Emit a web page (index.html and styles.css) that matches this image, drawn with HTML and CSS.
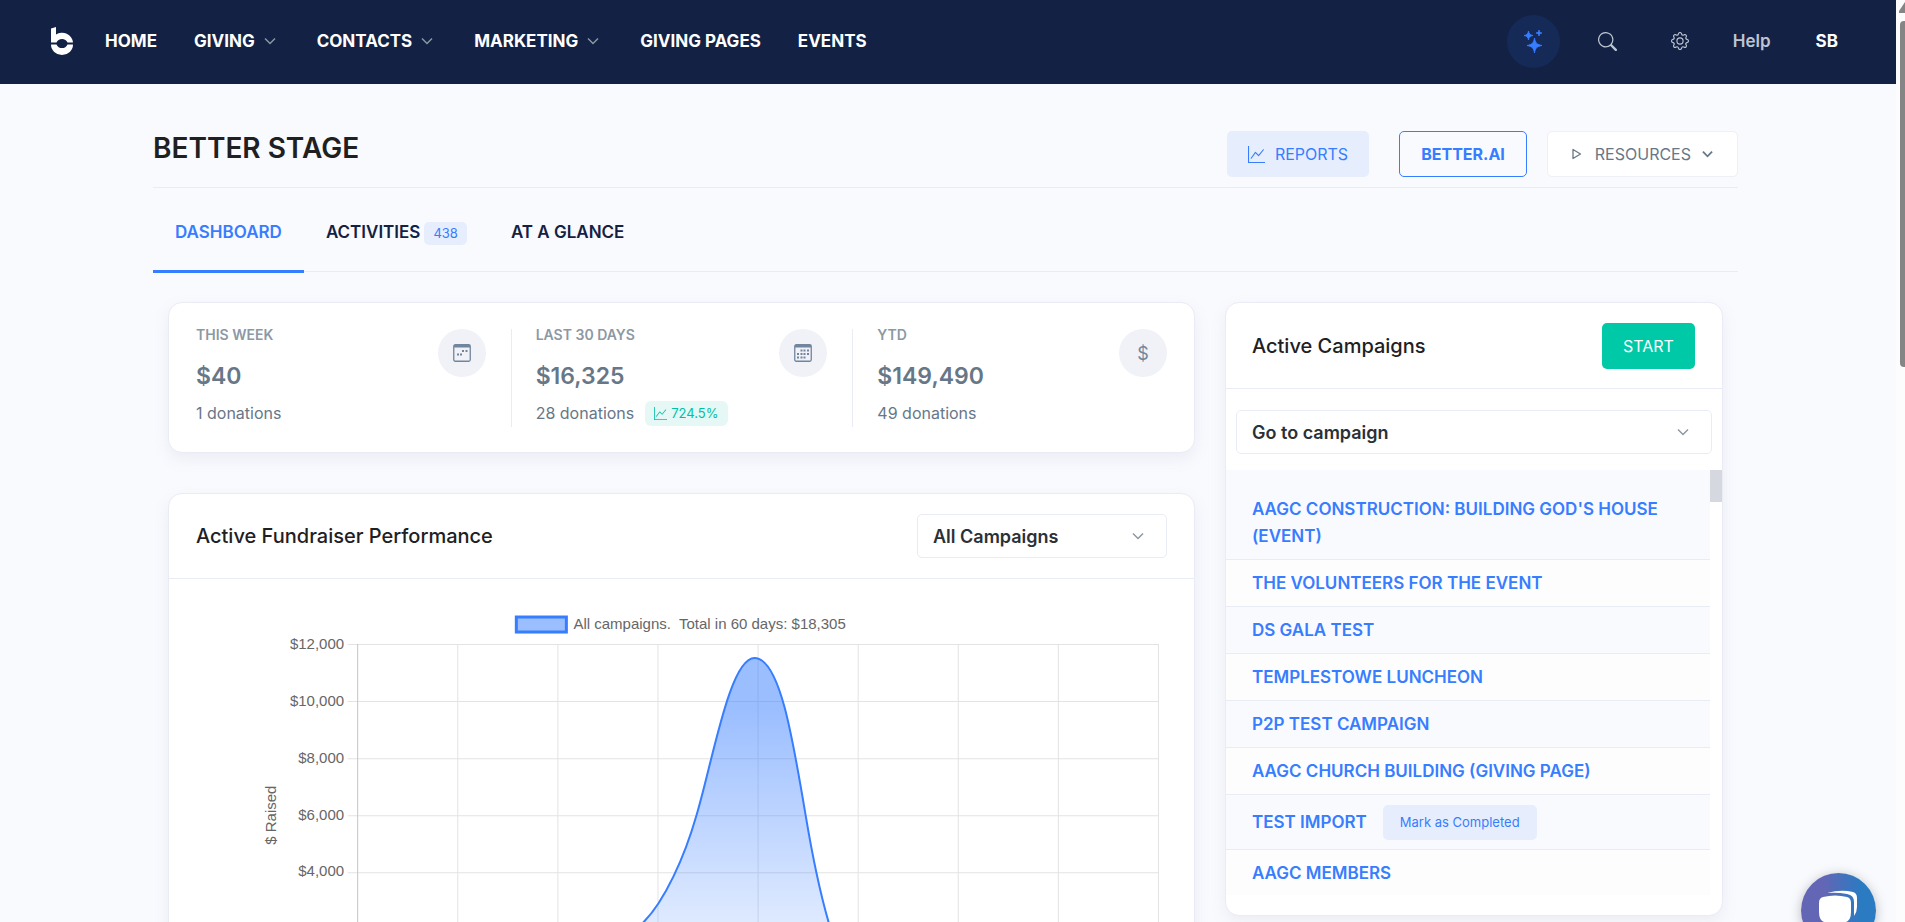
FILE: index.html
```
<!DOCTYPE html>
<html lang="en">
<head>
<meta charset="utf-8">
<title>Better Stage - Dashboard</title>
<link rel="stylesheet" href="styles.css">
</head>
<body>
<svg class="defs" aria-hidden="true">
  <symbol id="chevron" viewBox="0 0 12 8"><path d="M1 1.500 6 6.500 11 1.500" fill="none" stroke="currentColor" stroke-width="1.500"/></symbol>
  <symbol id="graph" viewBox="0 0 16 16"><path fill="currentColor" fill-rule="evenodd" d="M0 0h1v15h15v1H0V0Zm14.817 3.113a.5.5 0 0 1 .07.704l-4.500 5.500a.5.5 0 0 1-.740.037L7.060 6.767l-3.656 5.027a.5.5 0 0 1-.808-.588l4-5.500a.5.5 0 0 1 .758-.060l2.609 2.610 4.150-5.073a.5.5 0 0 1 .704-.070Z"/></symbol>
</svg>
<div class="app">
  <div class="page">
    <header class="topbar">
      <a class="logo" href="#" aria-label="Better home">
        <svg width="22" height="28" viewBox="0 0 22 28"><path d="M0 1.500 5 0v7.500A11 11 0 0 1 22 15.500h-5.500a6 6 0 0 0-11 0H0ZM0 17.500h5.500a6 6 0 0 0 11 0H22a11 10.500 0 0 1-22 0Z" fill="#fff"/></svg>
      </a>
      <nav class="nav">
        <a href="#">HOME</a>
        <a href="#">GIVING <svg class="chev"><use href="#chevron"/></svg></a>
        <a href="#">CONTACTS <svg class="chev"><use href="#chevron"/></svg></a>
        <a href="#">MARKETING <svg class="chev"><use href="#chevron"/></svg></a>
        <a href="#">GIVING PAGES</a>
        <a href="#">EVENTS</a>
      </nav>
      <div class="tools">
        <button class="spark" aria-label="Assistant">
          <svg width="18" height="23" viewBox="0 0 18 23" fill="#377dff"><path d="M10.500 8c.9 5 2.300 6.500 7.500 7.500-5.200 1-6.600 2.500-7.500 7.500-.9-5-2.300-6.500-7.500-7.500 5.200-1 6.600-2.500 7.500-7.500ZM4.500 1c.6 3 1.500 4 4.500 4.500-3 .6-3.900 1.500-4.500 4.500C3.900 7 3 6.100 0 5.500 3 5 3.900 4 4.500 1ZM15 0c.4 2 1 2.600 3 3-2 .4-2.600 1-3 3-.4-2-1-2.600-3-3 2-.4 2.600-1 3-3Z" stroke="#377dff" stroke-width=".8"/></svg>
        </button>
        <button class="tool" aria-label="Search">
          <svg width="19" height="19" viewBox="0 0 16 16"><path fill="currentColor" d="M11.742 10.344a6.500 6.500 0 1 0-1.397 1.398h-.001c.03.04.062.078.098.115l3.850 3.850a1 1 0 0 0 1.415-1.414l-3.850-3.850a1.007 1.007 0 0 0-.115-.100zM12 6.500a5.500 5.500 0 1 1-11 0 5.500 5.500 0 0 1 11 0z"/></svg>
        </button>
        <button class="tool" aria-label="Settings">
          <svg width="18" height="18" viewBox="0 0 16 16" fill="currentColor"><path d="M8 4.754a3.246 3.246 0 1 0 0 6.492 3.246 3.246 0 0 0 0-6.492zM5.754 8a2.246 2.246 0 1 1 4.492 0 2.246 2.246 0 0 1-4.492 0z"/><path d="M9.796 1.343c-.527-1.790-3.065-1.790-3.592 0l-.094.319a.873.873 0 0 1-1.255.520l-.292-.160c-1.640-.892-3.433.902-2.540 2.541l.159.292a.873.873 0 0 1-.520 1.255l-.319.094c-1.790.527-1.790 3.065 0 3.592l.319.094a.873.873 0 0 1 .520 1.255l-.160.292c-.892 1.640.901 3.434 2.541 2.540l.292-.159a.873.873 0 0 1 1.255.520l.094.319c.527 1.790 3.065 1.790 3.592 0l.094-.319a.873.873 0 0 1 1.255-.520l.292.160c1.640.893 3.434-.902 2.540-2.541l-.159-.292a.873.873 0 0 1 .520-1.255l.319-.094c1.790-.527 1.790-3.065 0-3.592l-.319-.094a.873.873 0 0 1-.520-1.255l.160-.292c.893-1.640-.902-3.433-2.541-2.540l-.292.159a.873.873 0 0 1-1.255-.520l-.094-.319zm-2.633.283c.246-.835 1.428-.835 1.674 0l.094.319a1.873 1.873 0 0 0 2.693 1.115l.291-.160c.764-.415 1.600.420 1.184 1.185l-.159.292a1.873 1.873 0 0 0 1.116 2.692l.318.094c.835.246.835 1.428 0 1.674l-.319.094a1.873 1.873 0 0 0-1.115 2.693l.160.291c.415.764-.420 1.600-1.185 1.184l-.291-.159a1.873 1.873 0 0 0-2.693 1.116l-.094.318c-.246.835-1.428.835-1.674 0l-.094-.319a1.873 1.873 0 0 0-2.692-1.115l-.292.160c-.764.415-1.600-.420-1.184-1.185l.159-.291A1.873 1.873 0 0 0 1.945 8.930l-.319-.094c-.835-.246-.835-1.428 0-1.674l.319-.094A1.873 1.873 0 0 0 3.060 4.377l-.160-.292c-.415-.764.420-1.600 1.185-1.184l.292.159a1.873 1.873 0 0 0 2.692-1.115l.094-.319z"/></svg>
        </button>
        <a class="help" href="#">Help</a>
        <a class="user" href="#">SB</a>
      </div>
    </header>

    <main class="content">
      <div class="heading">
        <h1>BETTER STAGE</h1>
        <div class="actions">
          <button class="btn btn-soft"><svg class="btn-icon"><use href="#graph"/></svg>REPORTS</button>
          <button class="btn btn-outline">BETTER.AI</button>
          <button class="btn btn-white"><svg class="play" viewBox="0 0 10 12"><path d="M1 1.500 8.500 6 1 10.500Z" fill="none" stroke="currentColor" stroke-width="1.300" stroke-linejoin="round"/></svg>RESOURCES<svg class="chev-sm" viewBox="0 0 12 8"><path d="M1 1.500 6 6.500 11 1.500" fill="none" stroke="currentColor" stroke-width="2"/></svg></button>
        </div>
      </div>
      <nav class="tabs">
        <a class="tab active" href="#">DASHBOARD</a>
        <a class="tab" href="#">ACTIVITIES <span class="count">438</span></a>
        <a class="tab" href="#">AT A GLANCE</a>
      </nav>

      <div class="columns">
        <div class="main-col">
          <section class="card stats">
            <div class="stat">
              <div>
                <h2>THIS WEEK</h2>
                <p class="amount">$40</p>
                <p class="donations">1 donations</p>
              </div>
              <span class="round"><svg width="18" height="18" viewBox="0 0 18 18"><rect x=".75" y=".75" width="16.500" height="16.500" rx="1.500" fill="none" stroke="currentColor" stroke-width="1.300"/><path d="M1 1h16v2.500H1ZM9 6h2v2H9zM12.500 6h2v2h-2zM4 9.500h2v2H4zM7 9.500h2v2H7z" fill="currentColor"/></svg></span>
            </div>
            <div class="stat">
              <div>
                <h2>LAST 30 DAYS</h2>
                <p class="amount">$16,325</p>
                <p class="donations">28 donations <span class="growth"><svg width="13" height="13"><use href="#graph"/></svg>724.5%</span></p>
              </div>
              <span class="round"><svg width="18" height="18" viewBox="0 0 18 18"><rect x=".75" y=".75" width="16.500" height="16.500" rx="1.500" fill="none" stroke="currentColor" stroke-width="1.300"/><path d="M1 1h16v2.500H1ZM6.500 5.500h2v2h-2zM9.500 5.500h2v2h-2zM13 5.500h2v2h-2zM3 9h2v2H3zM6.500 9h2v2h-2zM9.500 9h2v2h-2zM13 9h2v2h-2zM3 12.500h2v2H3zM6.500 12.500h2v2h-2zM9.500 12.500h2v2h-2z" fill="currentColor"/></svg></span>
            </div>
            <div class="stat">
              <div>
                <h2>YTD</h2>
                <p class="amount">$149,490</p>
                <p class="donations">49 donations</p>
              </div>
              <span class="round">$</span>
            </div>
          </section>

          <section class="card performance">
            <div class="card-head">
              <h2>Active Fundraiser Performance</h2>
              <div class="select">
                <select aria-label="Campaign"><option>All Campaigns</option></select>
                <svg class="chev"><use href="#chevron"/></svg>
              </div>
            </div>
            <div class="chart">
              <svg viewBox="0 0 970 500" role="img" aria-label="Donations raised in the last 60 days">
                <defs><linearGradient id="fill" gradientUnits="userSpaceOnUse" x1="0" y1="100" x2="0" y2="330"><stop offset="0" stop-color="#377dff" stop-opacity=".5"/><stop offset="1" stop-color="#377dff" stop-opacity=".14"/></linearGradient></defs>
                <g class="grid">
                  <path d="M151.500 37.500H962M151.500 94.500H962M151.500 151.500H962M151.500 208.500H962M151.500 265.500H962M151.500 322.500H962M151.500 379.500H962"/>
                  <path d="M261.500 37V379M361.500 37V379M461.500 37V379M561.500 37V379M661.500 37V379M761.500 37V379M861.500 37V379M961.500 37V379"/>
                  <path class="axis" d="M161.500 37V379"/>
                </g>
                <path d="M161 379C300 379 400 360 447 315C468 294 488 250 500 208C516 155 533 51 558 51C583 51 596 130 609 208C616 250 623 284 632 315C640 345 650 372 664 379Z" fill="url(#fill)"/>
                <path class="line" d="M161 379C300 379 400 360 447 315C468 294 488 250 500 208C516 155 533 51 558 51C583 51 596 130 609 208C616 250 623 284 632 315C640 345 650 372 664 379H961"/>
                <rect x="320" y="10" width="50" height="15" fill="#9bbeff" stroke="#377dff" stroke-width="3"/>
                <g class="labels">
                  <text x="377" y="22" xml:space="preserve">All campaigns.  Total in 60 days: $18,305</text>
                  <g text-anchor="end">
                    <text x="148" y="42">$12,000</text>
                    <text x="148" y="99">$10,000</text>
                    <text x="148" y="156">$8,000</text>
                    <text x="148" y="213">$6,000</text>
                    <text x="148" y="269">$4,000</text>
                    <text x="148" y="326">$2,000</text>
                    <text x="148" y="383">$0</text>
                  </g>
                  <text transform="translate(80 208) rotate(-90)" text-anchor="middle">$ Raised</text>
                </g>
              </svg>
            </div>
          </section>
        </div>

        <aside class="card campaigns">
          <div class="card-head">
            <h2>Active Campaigns</h2>
            <button class="btn btn-start">START</button>
          </div>
          <div class="select goto">
            <select aria-label="Go to campaign"><option>Go to campaign</option></select>
            <svg class="chev"><use href="#chevron"/></svg>
          </div>
          <div class="list-wrap">
            <ul class="list">
              <li><a href="#">AAGC CONSTRUCTION: BUILDING GOD'S HOUSE (EVENT)</a></li>
              <li><a href="#">THE VOLUNTEERS FOR THE EVENT</a></li>
              <li><a href="#">DS GALA TEST</a></li>
              <li><a href="#">TEMPLESTOWE LUNCHEON</a></li>
              <li><a href="#">P2P TEST CAMPAIGN</a></li>
              <li><a href="#">AAGC CHURCH BUILDING (GIVING PAGE)</a></li>
              <li><a href="#">TEST IMPORT</a><button class="mark">Mark as Completed</button></li>
              <li><a href="#">AAGC MEMBERS</a></li>
            </ul>
            <div class="list-bar"></div>
          </div>
        </aside>
      </div>
    </main>
    <button class="chat" aria-label="Open chat">
      <svg width="40" height="42" viewBox="0 0 40 42"><path d="M8 3Q22-1 34 2Q38 3 38 8V17Q38 22 35 26V12Q35 5 28 4Q18 2 8 3Z" fill="#fff"/><path d="M4 7Q16 4 28 7Q32 8 32 13V22Q32 30 27 32Q16 35 5 32Q0 30 0 22V13Q0 8 4 7Z" fill="#fff"/></svg>
    </button>
  </div>
  <div class="scrollbar"><svg width="9" height="14" viewBox="0 0 9 14"><path d="M3 13V11L9 2V13Z" fill="#858585"/></svg><div class="thumb"></div></div>
</div>
</body>
</html>
```
FILE: styles.css
```
* { box-sizing: border-box; }
body { margin: 0; font-family: Inter, "Liberation Sans", sans-serif; font-size: 17px; color: #1e2022; background: #f8fafd; }
h1, h2, p, ul { margin: 0; padding: 0; }
a { color: inherit; text-decoration: none; }
button, select { font: inherit; color: inherit; }
button { display: inline-flex; align-items: center; justify-content: center; border: 0; background: none; padding: 0; }
svg { display: block; flex: none; }
.defs { position: absolute; width: 0; height: 0; }
.app { display: flex; height: 100vh; overflow: hidden; }
.page { flex: 1; min-width: 0; background: #f9fafe; }

.topbar { display: flex; align-items: center; height: 84px; padding: 0 58px 0 51px; background: #132144; color: #fff; }
.logo { margin-right: 32px; padding-bottom: 2px; }
.nav { display: flex; align-items: center; gap: 37px; font-weight: 700; padding-bottom: 2px; }
.nav a { display: flex; align-items: center; gap: 9px; }
.chev { width: 12px; height: 8px; color: #8c98a4; }
.nav .chev { margin-right: 4px; }
.tools { display: flex; align-items: center; margin-left: auto; color: #bdc5d1; font-weight: 600; padding-bottom: 2px; }
.spark { width: 53px; height: 53px; border-radius: 50%; background: #162a57; margin-right: 38px; }
.tool { margin-right: 54px; }
.tool + .tool { margin-right: 44px; }
.help { margin-right: 45px; }
.user { color: #fff; font-weight: 700; }

.content { padding: 47px 158px 0 153px; }
.heading { display: flex; justify-content: space-between; border-bottom: 1px solid #e9ecf3; padding-bottom: 10px; }
h1 { font-size: 28px; line-height: 34px; font-weight: 600; }
.actions { display: flex; }
.btn { height: 46px; border-radius: 5px; border: 1px solid transparent; padding: 0 20px; font-size: 16px; }
.btn-soft { background: #e6edfd; color: #377dff; margin-right: 30px; }
.btn-icon { width: 17px; height: 17px; margin-right: 10px; }
.btn-outline { border-color: #377dff; color: #377dff; font-weight: 700; margin-right: 20px; padding: 0 21px; }
.btn-white { background: #fff; border-color: #edf0f6; color: #677788; padding: 0 24px; }
.play { width: 10px; height: 12px; margin-right: 13px; }
.chev-sm { width: 11px; height: 8px; margin-left: 11px; }
.tabs { display: flex; height: 84px; border-bottom: 1px solid #e9ecf3; color: #132144; font-weight: 600; }
.tab { display: flex; align-items: center; gap: 4px; padding: 6px 22px 0; margin-bottom: -2px; border-bottom: 3px solid transparent; }
.tab.active { color: #377dff; border-color: #377dff; }
.count { background: #e6edfd; color: #377dff; border-radius: 5px; padding: 0 9px; font-size: 13px; line-height: 23px; font-weight: 400; margin-top: 3px; }

.columns { display: grid; grid-template-columns: minmax(0, 1027fr) minmax(0, 498fr); gap: 30px; padding: 30px 15px 0; align-items: start; }
.main-col { display: grid; gap: 40px; }
.card { background: #fff; border: 1px solid #e9ecf5; border-radius: 14px; box-shadow: 0 6px 15px rgba(140, 152, 164, .12); }
.stats { display: grid; grid-template-columns: repeat(3, 1fr); padding: 26px 0 25px; }
.stat { display: flex; justify-content: space-between; padding: 0 25px 0 27px; height: 98px; }
.stat + .stat { border-left: 1px solid #e9ecf3; padding-left: 24px; }
.stat:last-child { padding-right: 27px; }
.stat h2 { font-size: 14px; line-height: 12px; font-weight: 600; color: #8c98a4; }
.amount { font-size: 23px; line-height: 30px; font-weight: 600; color: #677788; margin-top: 20px; }
.donations { display: flex; align-items: center; gap: 11px; font-size: 16px; line-height: 25px; color: #677788; margin-top: 10px; }
.growth { display: flex; align-items: center; gap: 4px; padding: 0 9px; border-radius: 6px; background: #e5f8f6; color: #00c0a3; font-size: 13px; line-height: 25px; }
.round { display: flex; align-items: center; justify-content: center; width: 48px; height: 48px; border-radius: 50%; background: #f1f2f7; color: #71869d; font-size: 18px; }

.card-head { display: flex; align-items: center; justify-content: space-between; height: 86px; padding: 0 27px 0 26px; border-bottom: 1px solid #e9ecf5; }
.card-head h2 { font-size: 20px; line-height: 24px; font-weight: 500; }
.performance .card-head { height: 85px; padding-left: 27px; }
.select { position: relative; display: flex; align-items: center; width: 250px; }
.select select { appearance: none; width: 100%; height: 44px; border: 1px solid #e9ecf5; border-radius: 5px; background: #fff; padding: 0 15px; font-size: 18px; font-weight: 600; color: #2b3036; }
.select .chev { position: absolute; right: 23px; color: #8c98a4; }
.chart { padding: 28px 27px 20px; }
.grid path { fill: none; stroke: #e3e3e3; }
.grid .axis { stroke: #c5c5c5; }
.line { fill: none; stroke: #377dff; stroke-width: 2; }
.labels { font: 15px "Liberation Sans", sans-serif; fill: #666; }

.campaigns { overflow: hidden; padding-bottom: 20px; }
.btn-start { width: 93px; background: #00c9a7; color: #fff; }
.goto { width: auto; margin: 21px 10px 16px; }
.list-wrap { display: flex; }
.list { flex: 1; list-style: none; padding-top: 16px; background: #f9fafe; color: #377dff; font-weight: 600; line-height: 27px; }
.list li { display: flex; align-items: center; padding: 10px 26px 9px; border-bottom: 1px solid #e9ecf5; }
.list li:nth-child(even) { background: #fdfdfe; }
.list li:last-child { border: 0; padding-bottom: 8px; }
.mark { height: 35px; margin-left: 16px; padding: 0 17px; border-radius: 5px; background: #e6edfd; font-size: 13px; font-weight: 400; }
.list-bar { width: 12px; }
.list-bar::before { content: ""; display: block; height: 32px; background: #d5d8de; }

.chat { position: fixed; right: 29px; bottom: -26px; width: 75px; height: 75px; border-radius: 50%; background: linear-gradient(90deg, #6366b5 30%, #2a7bc2 80%); box-shadow: 0 2px 12px rgba(0, 0, 0, .25); }
.scrollbar { width: 9px; background: #fcfcfc; }
.thumb { height: 346px; margin: 7px 0 0 4px; background: #858585; border-radius: 4px 0 0 4px; }
```
